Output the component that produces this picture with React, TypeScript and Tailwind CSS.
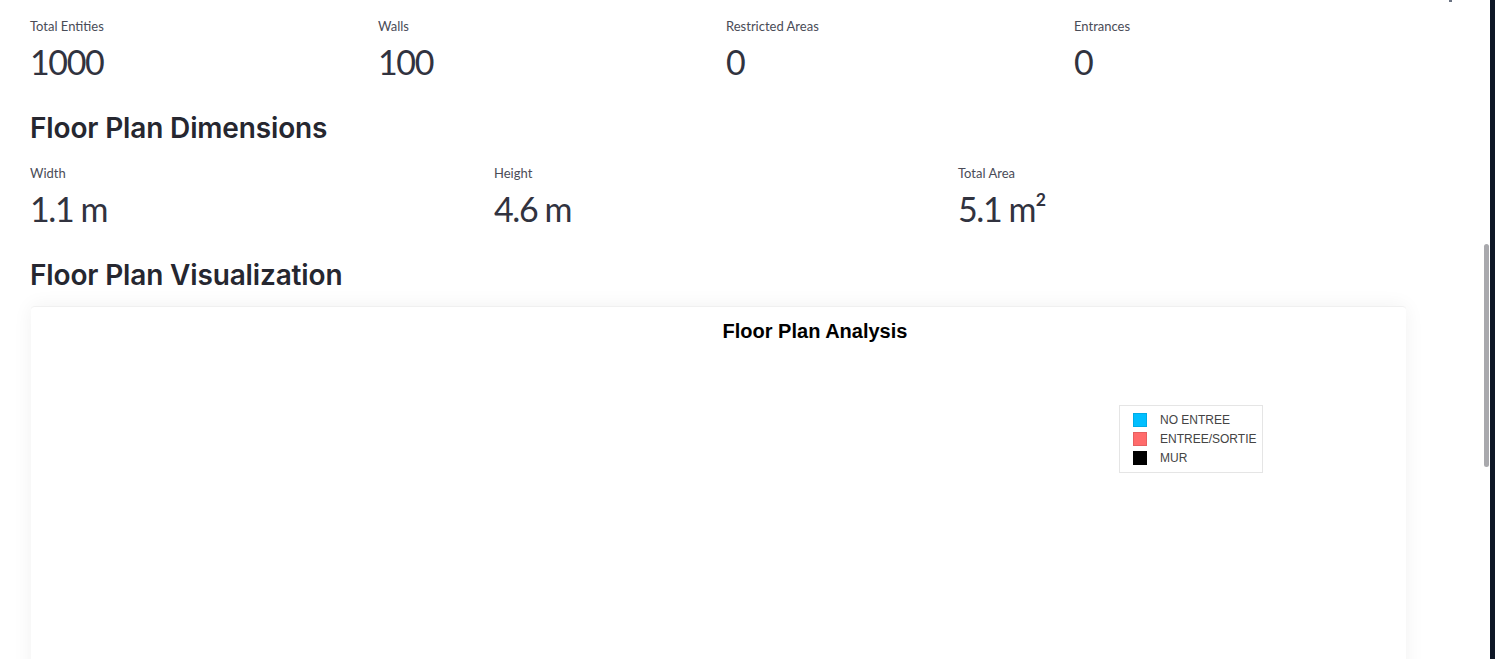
const metrics = [
  { label: "Total Entities", value: "1000" },
  { label: "Walls", value: "100" },
  { label: "Restricted Areas", value: "0" },
  { label: "Entrances", value: "0" },
];

const dims = [
  { label: "Width", value: "1.1 m" },
  { label: "Height", value: "4.6 m" },
  { label: "Total Area", value: "5.1 m²" },
];

const legend = [
  { name: "NO ENTREE", color: "bg-[#00bfff]" },
  { name: "ENTREE/SORTIE", color: "bg-[#ff6b6b]" },
  { name: "MUR", color: "bg-black" },
];

function Metric({ label, value }: { label: string; value: string }) {
  return (
    <div className="flex flex-col">
      <span className="text-[13px] leading-5 text-[#4a4c57] font-['Lato',sans-serif]">{label}</span>
      <span className="mt-[6px] text-[34px] leading-[40px] text-[#31333f] font-['Lato',sans-serif] tracking-[-1.4px]">
        {value}
      </span>
    </div>
  );
}

export default function App() {
  return (
    <div className="flex h-[659px] w-full overflow-hidden bg-white">
      <main className="relative flex-1 overflow-hidden pl-[30px] pr-[84px]">
        <div className="absolute right-[38px] top-0 h-[2px] w-[3px] bg-gray-500" />
        <div className="absolute right-[1px] top-[244px] h-[223px] w-[5px] rounded-full bg-[#a9a9ad]" />

        <div className="grid grid-cols-4 gap-4 pt-4">
          {metrics.map((m) => (
            <Metric key={m.label} {...m} />
          ))}
        </div>

        <h3 className="mt-[28px] text-[28px] font-semibold leading-[36px] text-[#262730] font-['Inter',sans-serif] tracking-[-0.15px]">
          Floor Plan Dimensions
        </h3>

        <div className="mt-[17px] grid grid-cols-3 gap-4">
          {dims.map((m) => (
            <Metric key={m.label} {...m} />
          ))}
        </div>

        <h3 className="mt-[28px] text-[28px] font-semibold leading-[36px] text-[#262730] font-['Inter',sans-serif] tracking-[-0.15px]">
          Floor Plan Visualization
        </h3>

        <div className="relative mt-[13px] ml-px h-[400px] rounded-t border-t border-[#f0f0f0] bg-white shadow-[0_0_20px_rgba(0,0,0,0.06)]">
          <div className="pl-[193px] pt-[12px] text-center text-[20px] font-bold leading-6 text-black font-['Liberation_Sans',Arial,sans-serif]">
            Floor Plan Analysis
          </div>
          <div className="absolute left-[1088px] top-[98px] flex w-[144px] flex-col gap-[5px] border border-[#e5e5e5] bg-white py-[7px] pl-[13px] font-['Liberation_Sans',Arial,sans-serif]">
            {legend.map((l) => (
              <div key={l.name} className="flex items-center gap-[13px] text-[12px] leading-[14px] text-[#444]">
                <span className={`h-[14px] w-[14px] ${l.color} border border-black/10`} />
                <span>{l.name}</span>
              </div>
            ))}
          </div>
        </div>
      </main>
      <div className="w-[5px] bg-[#0e1726]" />
    </div>
  );
}
